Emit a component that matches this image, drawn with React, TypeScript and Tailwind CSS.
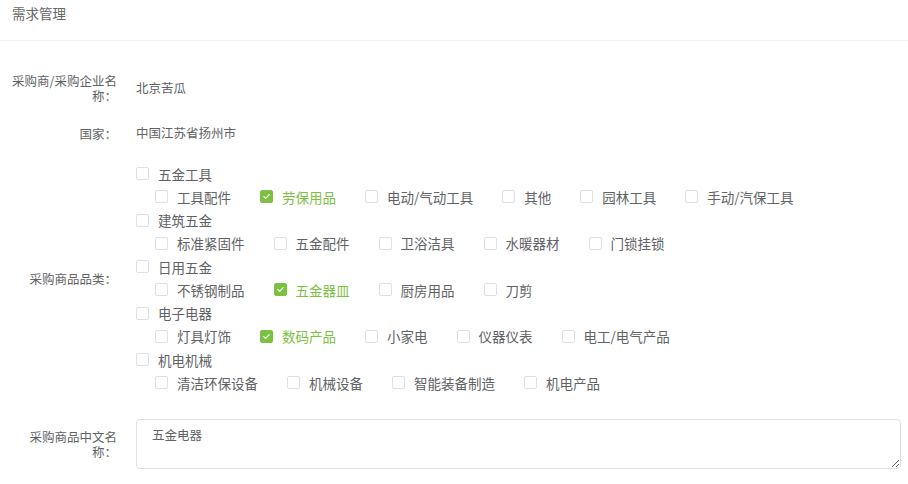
import React from "react";

type Item = { label: string; checked?: boolean };
type Group = { label: string; children: Item[] };

const groups: Group[] = [
  {
    label: "五金工具",
    children: [
      { label: "工具配件" },
      { label: "劳保用品", checked: true },
      { label: "电动/气动工具" },
      { label: "其他" },
      { label: "园林工具" },
      { label: "手动/汽保工具" },
    ],
  },
  {
    label: "建筑五金",
    children: [
      { label: "标准紧固件" },
      { label: "五金配件" },
      { label: "卫浴洁具" },
      { label: "水暖器材" },
      { label: "门锁挂锁" },
    ],
  },
  {
    label: "日用五金",
    children: [
      { label: "不锈钢制品" },
      { label: "五金器皿", checked: true },
      { label: "厨房用品" },
      { label: "刀剪" },
    ],
  },
  {
    label: "电子电器",
    children: [
      { label: "灯具灯饰" },
      { label: "数码产品", checked: true },
      { label: "小家电" },
      { label: "仪器仪表" },
      { label: "电工/电气产品" },
    ],
  },
  {
    label: "机电机械",
    children: [
      { label: "清洁环保设备" },
      { label: "机械设备" },
      { label: "智能装备制造" },
      { label: "机电产品" },
    ],
  },
];

function Box({ checked }: { checked?: boolean }) {
  return checked ? (
    <span className="flex h-[13px] w-[13px] shrink-0 items-center justify-center rounded-[2px] border border-[#7cc142] bg-[#7cc142]">
      <svg width="9" height="9" viewBox="0 0 9 9" fill="none">
        <path d="M1.8 4.6 L3.7 6.4 L7.2 2.6" stroke="white" strokeWidth="1.2" strokeLinecap="round" strokeLinejoin="round" />
      </svg>
    </span>
  ) : (
    <span className="h-[13px] w-[13px] shrink-0 rounded-[2px] border border-[#dcdfe6] bg-white" />
  );
}

function Check({ item }: { item: Item }) {
  return (
    <label className="mr-[29px] flex items-center">
      <Box checked={item.checked} />
      <span className={`ml-[9px] whitespace-nowrap ${item.checked ? "text-[#7cc142]" : "text-[#606266]"}`}>{item.label}</span>
    </label>
  );
}

export default function App() {
  const font = { fontFamily: '"Noto Sans CJK SC", "Noto Sans", sans-serif' };
  return (
    <div className="h-[484px] w-[908px] overflow-hidden bg-white" style={font}>
      <div className="h-[41px] border-b border-[#eef0f4] pl-[12px] pt-[5px] text-[13.5px] leading-[16px] text-[#666666]">需求管理</div>

      <div className="mt-[32px] flex h-[30px] items-center">
        <div className="ml-[9px] w-[108px] text-right text-[12.5px] leading-[15px] text-[#606266]">采购商/采购企业名称：</div>
        <div className="ml-[19px] text-[12.5px] text-[#606266]">北京苦瓜</div>
      </div>

      <div className="mt-[15px] flex h-[30px] items-center">
        <div className="ml-[9px] w-[108px] text-right text-[12.5px] leading-[15px] text-[#606266]">国家：</div>
        <div className="ml-[19px] text-[12.5px] text-[#606266]">中国江苏省扬州市</div>
      </div>

      <div className="mt-[14px] flex items-center">
        <div className="ml-[9px] w-[108px] text-right text-[12.5px] leading-[15px] text-[#606266]">采购商品品类：</div>
        <div className="ml-[19px] flex flex-col text-[13.5px]">
          {groups.map((g) => (
            <React.Fragment key={g.label}>
              <div className="flex h-[23.25px] items-center">
                <Check item={{ label: g.label }} />
              </div>
              <div className="flex h-[23.25px] items-center pl-[19px]">
                {g.children.map((c) => (
                  <Check key={c.label} item={c} />
                ))}
              </div>
            </React.Fragment>
          ))}
        </div>
      </div>

      <div className="mt-[24.5px] flex items-center">
        <div className="ml-[9px] w-[108px] text-right text-[12.5px] leading-[15px] text-[#606266]">采购商品中文名称：</div>
        <textarea
          className="ml-[19px] h-[50px] w-[765px] rounded-[4px] border border-[#dcdfe6] px-[15px] pt-[6px] text-[12.5px] leading-[18px] text-[#606266] outline-none"
          defaultValue="五金电器"
        />
      </div>
    </div>
  );
}
